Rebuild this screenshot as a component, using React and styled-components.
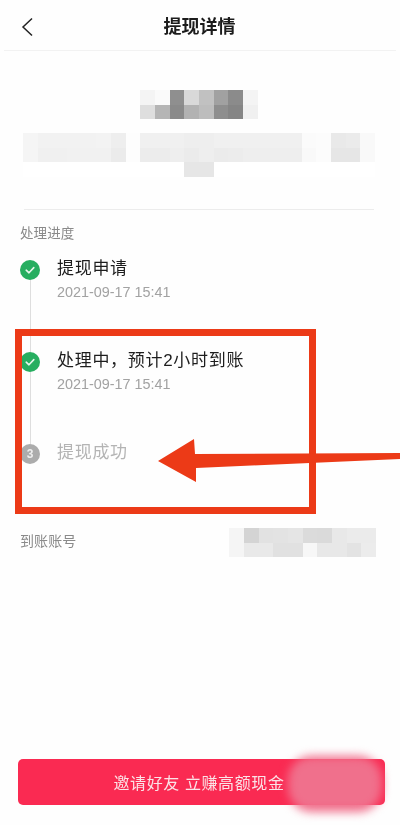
import React from 'react'
import styled, { createGlobalStyle } from 'styled-components'

const FONT = `'Liberation Sans', 'Noto Sans CJK SC', sans-serif`

const CELL_W = 14.67
const CELL_H = 14.5

const nameCells = [
  ['#f4f4f4', '#fafafa', '#8f8f8f', '#d9d9d9', '#c1c1c1', '#a1a1a1', '#8b8b8b', '#f4f4f4'],
  ['#dedede', '#b5b5b5', '#8a8a8a', '#b2b2b2', '#bdbdbd', '#8e8e8e', '#858585', '#f0f0f0']
]

const infoCells = [
  ['#f5f5f5', '#f2f2f2', '#f2f2f2', '#f2f2f2', '#f2f2f2', '#f3f3f3', '#eeeeee', '#fdfdfd', '#f0f0f0', '#f0f0f0', '#f0f0f0', '#eeeeee', '#eeeeee', '#f0f0f0', '#f0f0f0', '#f0f0f0', '#f0f0f0', '#f0f0f0', '#f0f0f0', '#fbfbfb', '#fcfcfc', '#e9e9e9', '#ebebeb', '#f9f9f9'],
  ['#f5f5f5', '#f0f0f0', '#f0f0f0', '#f1f1f1', '#f1f1f1', '#f1f1f1', '#ebebeb', '#fdfdfd', '#ececec', '#ececec', '#eeeeee', '#ebebeb', '#eeeeee', '#ebebeb', '#ececec', '#eeeeee', '#eeeeee', '#eeeeee', '#eeeeee', '#f9f9f9', '#fcfcfc', '#e6e6e6', '#e6e6e6', '#f9f9f9'],
  ['#fff', '#fff', '#fff', '#fff', '#fff', '#fff', '#fff', '#fff', '#fff', '#fff', '#fff', '#e6e6e6', '#e6e6e6', '#fff', '#fff', '#fff', '#fff', '#fff', '#fff', '#fff', '#fff', '#fff', '#fff', '#fff']
]

const accountCells = [
  ['#f5f5f5', '#d4d4d4', '#e2e2e2', '#e3e3e3', '#e5e5e5', '#dbdbdb', '#dadada', '#e8e8e8', '#ebebeb', '#ebebeb'],
  ['#f5f5f5', '#e9e9e9', '#e9e9e9', '#e1e1e1', '#e1e1e1', '#f7f7f7', '#e8e8e8', '#e8e8e8', '#e3e3e3', '#ececec']
]

const steps = [
  { title: '提现申请', time: '2021-09-17 15:41', done: true },
  { title: '处理中，预计2小时到账', time: '2021-09-17 15:41', done: true },
  { title: '提现成功', done: false, num: 3 }
]

const Mosaic = ({ rows }) => (
  <MosaicGrid $cols={rows[0].length}>
    {rows.flat().map((color, i) => (
      <MosaicCell key={i} $color={color} />
    ))}
  </MosaicGrid>
)

const Check = () => (
  <svg width='12' height='12' viewBox='0 0 12 12' fill='none'>
    <path d='M2.2 6.2 L5 8.8 L9.8 3.6' stroke='#e6f6ec' strokeWidth='1.6' strokeLinecap='round' strokeLinejoin='round' />
  </svg>
)

const App = () => (
  <Page>
    <GlobalStyle />
    <Header>
      <BackButton>
        <svg width='12' height='20' viewBox='0 0 12 20' fill='none'>
          <path d='M11 1.5 L2 10 L11 18.5' stroke='#222' strokeWidth='1.5' />
        </svg>
      </BackButton>
      <Title>提现详情</Title>
    </Header>

    <Summary>
      <Mosaic rows={nameCells} />
      <Mosaic rows={infoCells} />
    </Summary>

    <Section>
      <Label>处理进度</Label>
      <Timeline>
        {steps.map((step, i) => (
          <Step key={step.title}>
            <Rail>
              <Dot $done={step.done}>{step.done ? <Check /> : step.num}</Dot>
              {i < steps.length - 1 && <Connector />}
            </Rail>
            <StepBody>
              <StepTitle $done={step.done}>{step.title}</StepTitle>
              {step.time && <StepTime>{step.time}</StepTime>}
            </StepBody>
          </Step>
        ))}
      </Timeline>
    </Section>

    <AccountRow>
      <AccountLabel>到账账号</AccountLabel>
      <Mosaic rows={accountCells} />
    </AccountRow>

    <Footer>
      <InviteButton>邀请好友 立赚高额现金</InviteButton>
      <Smudge />
    </Footer>

    <Highlight />
    <Arrow width='242' height='44' viewBox='0 0 242 44' fill='#ec3a17'>
      <path d='M0 22 L36 0 L37 15 L242 14 L242 20 L38 29 L38 43 Z' />
    </Arrow>
  </Page>
)

const GlobalStyle = createGlobalStyle`
  html, body {
    margin: 0;
    padding: 0;
    background: #fff;
  }
`

const Page = styled.div`
  position: relative;
  width: 400px;
  height: 825px;
  overflow: hidden;
  display: flex;
  flex-direction: column;
  background: #fefefe;
  font-family: ${FONT};
  filter: blur(0.3px);
`

const Header = styled.header`
  position: relative;
  height: 50px;
  flex: none;
  display: flex;
  align-items: center;
  justify-content: center;
  border-bottom: 1px solid #f2f2f2;
  margin: 0 4px;
`

const BackButton = styled.div`
  position: absolute;
  left: 17px;
  top: 17px;
  line-height: 0;
`

const Title = styled.h1`
  margin: 0 0 0 -1px;
  font-size: 18px;
  font-weight: 700;
  color: #1c1c1c;
`

const Summary = styled.section`
  flex: none;
  height: 159px;
  margin: 0 26px 0 24px;
  padding-top: 39px;
  box-sizing: border-box;
  display: flex;
  flex-direction: column;
  align-items: center;
  gap: 14px;
  border-bottom: 1px solid #ececec;
`

const MosaicGrid = styled.div`
  display: grid;
  grid-template-columns: repeat(${(p) => p.$cols}, ${CELL_W}px);
  grid-auto-rows: ${CELL_H}px;
`

const MosaicCell = styled.div`
  background: ${(p) => p.$color};
`

const Section = styled.section`
  flex: none;
  padding: 15px 0 0 20px;
`

const Label = styled.div`
  font-size: 13.5px;
  line-height: 18px;
  letter-spacing: 0.1px;
  color: #8a8a8a;
`

const AccountLabel = styled(Label)`
  font-size: 14px;
  margin-bottom: 4px;
`

const Timeline = styled.div`
  margin-top: 17px;
`

const Step = styled.div`
  display: flex;
  height: 92px;
  &:last-child {
    height: 72px;
  }
`

const Rail = styled.div`
  width: 20px;
  flex: none;
  display: flex;
  flex-direction: column;
  align-items: center;
`

const Dot = styled.div`
  width: 20px;
  height: 20px;
  flex: none;
  border-radius: 50%;
  display: flex;
  align-items: center;
  justify-content: center;
  background: ${(p) => (p.$done ? '#27ae60' : '#acacac')};
  color: #eee;
  font-size: 12px;
  font-weight: 700;
`

const Connector = styled.div`
  width: 1px;
  flex: 1;
  background: #dedede;
`

const StepBody = styled.div`
  margin-left: 17px;
  margin-top: -3px;
`

const StepTitle = styled.div`
  font-size: 17px;
  line-height: 24px;
  letter-spacing: 0.7px;
  color: ${(p) => (p.$done ? '#1d1d1d' : '#b4b4b4')};
`

const StepTime = styled.div`
  font-size: 14.4px;
  line-height: 18px;
  margin-top: 2px;
  color: #a2a2a2;
`

const AccountRow = styled.section`
  flex: none;
  display: flex;
  justify-content: space-between;
  align-items: center;
  padding: 0 24px 0 20px;
  margin-top: 12px;
`

const Footer = styled.footer`
  position: relative;
  margin-top: auto;
  padding: 0 15px 20px 18px;
`

const InviteButton = styled.button`
  display: block;
  width: 100%;
  height: 46px;
  border: 0;
  border-radius: 5px;
  padding: 0 5px 0 0;
  background: #fa2a52;
  color: #fbe3e7;
  font-family: ${FONT};
  font-size: 16px;
  letter-spacing: 0.6px;
`

const Smudge = styled.div`
  position: absolute;
  left: 288px;
  top: -3px;
  width: 94px;
  height: 56px;
  border-radius: 24px;
  background: #f0708c;
  filter: blur(5px);
`

const Highlight = styled.div`
  position: absolute;
  left: 15px;
  top: 329px;
  width: 301px;
  height: 185px;
  box-sizing: border-box;
  border: 7px solid #ec3a17;
`

const Arrow = styled.svg`
  position: absolute;
  left: 158px;
  top: 439px;
`

export default App
